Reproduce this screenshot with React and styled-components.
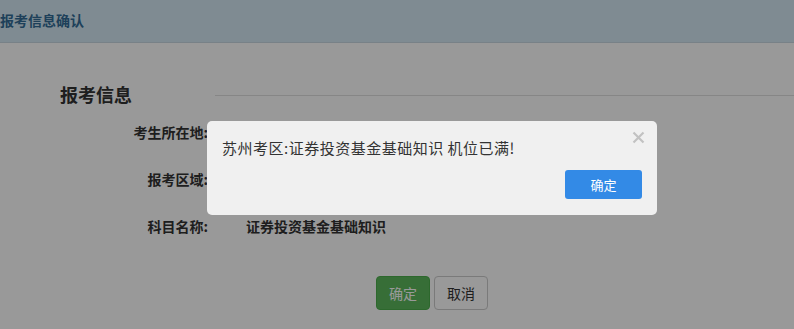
import React from 'react';
import styled, { createGlobalStyle } from 'styled-components';

const GlobalStyle = createGlobalStyle`
  body {
    margin: 0;
    background: #fff;
    font-family: "Noto Sans CJK SC", "Noto Sans", sans-serif;
    color: #333;
  }
`;

const Page = styled.div`
  width: 794px;
  height: 329px;
  overflow: hidden;
  background: #fff;
`;

const Header = styled.div`
  height: 43px;
  background: #d4e8f3;
  border-bottom: 1px solid #c8d8e2;
  display: flex;
  align-items: center;
  padding-bottom: 3px;
  box-sizing: border-box;
`;

const HeaderTitle = styled.div`
  font-size: 14px;
  font-weight: bold;
  color: #326c96;
`;

const Section = styled.div`
  padding-top: 39px;
`;

const TitleRow = styled.div`
  display: flex;
  align-items: center;
  height: 24px;
  padding-left: 60px;
`;

const SectionTitle = styled.h2`
  margin: 0;
  width: 155px;
  font-size: 18px;
  line-height: 24px;
  font-weight: bold;
  color: #333;
`;

const Rule = styled.div`
  flex: 1;
  height: 1px;
  background: #e0e0e0;
  margin-top: 2px;
`;

const Form = styled.div`
  margin-top: 2px;
`;

const Row = styled.div`
  display: grid;
  grid-template-columns: 208px 1fr;
  height: 47px;
  align-items: center;
`;

const Label = styled.div`
  text-align: right;
  font-size: 14px;
  font-weight: bold;
  color: #333;
`;

const Value = styled.div`
  padding-left: 38px;
  font-size: 14px;
  font-weight: bold;
  color: #333;
`;

const Actions = styled.div`
  display: flex;
  gap: 4px;
  padding-left: 376px;
  margin-top: 27px;
`;

const Button = styled.button`
  width: 54px;
  height: 34px;
  box-sizing: border-box;
  border-radius: 4px;
  font-family: inherit;
  font-size: 14px;
  padding: 0;
  border: 1px solid ${p => (p.$primary ? '#4cae4c' : '#ccc')};
  background: ${p => (p.$primary ? '#5cb85c' : '#fff')};
  color: ${p => (p.$primary ? '#fff' : '#333')};
`;

const Overlay = styled.div`
  position: fixed;
  inset: 0;
  background: rgba(0, 0, 0, 0.4);
`;

const Dialog = styled.div`
  position: fixed;
  left: 207px;
  top: 121px;
  width: 450px;
  height: 94px;
  box-sizing: border-box;
  background: #f0f0f0;
  border-radius: 5px;
  padding: 17px 15px 0 15px;
  display: flex;
  flex-direction: column;
`;

const Message = styled.div`
  font-size: 15px;
  line-height: 20px;
  letter-spacing: 0.5px;
  color: #333;
`;

const Close = styled.div`
  position: absolute;
  right: 12px;
  top: 10px;
  width: 13px;
  height: 13px;
  display: flex;
`;

const DialogFooter = styled.div`
  display: flex;
  justify-content: flex-end;
  margin-top: 12px;
`;

const DialogButton = styled.button`
  width: 77px;
  height: 29px;
  border: none;
  border-radius: 3px;
  background: #338ae6;
  color: #fff;
  font-family: inherit;
  font-size: 13px;
  padding: 0;
`;

const rows = [
  { label: '考生所在地:', value: '' },
  { label: '报考区域:', value: '' },
  { label: '科目名称:', value: '证券投资基金基础知识' },
];

export default function App() {
  return (
    <>
      <GlobalStyle />
      <Page>
        <Header>
          <HeaderTitle>报考信息确认</HeaderTitle>
        </Header>
        <Section>
          <TitleRow>
            <SectionTitle>报考信息</SectionTitle>
            <Rule />
          </TitleRow>
          <Form>
            {rows.map((r, i) => (
              <Row key={i}>
                <Label>{r.label}</Label>
                <Value>{r.value}</Value>
              </Row>
            ))}
          </Form>
          <Actions>
            <Button $primary>确定</Button>
            <Button>取消</Button>
          </Actions>
        </Section>
      </Page>
      <Overlay />
      <Dialog>
        <Close>
          <svg width="13" height="13" viewBox="0 0 13 13">
            <path d="M1.5 1.5 L11.5 11.5 M11.5 1.5 L1.5 11.5" stroke="#c2c2c2" strokeWidth="2.2" />
          </svg>
        </Close>
        <Message>苏州考区:证券投资基金基础知识 机位已满!</Message>
        <DialogFooter>
          <DialogButton>确定</DialogButton>
        </DialogFooter>
      </Dialog>
    </>
  );
}
